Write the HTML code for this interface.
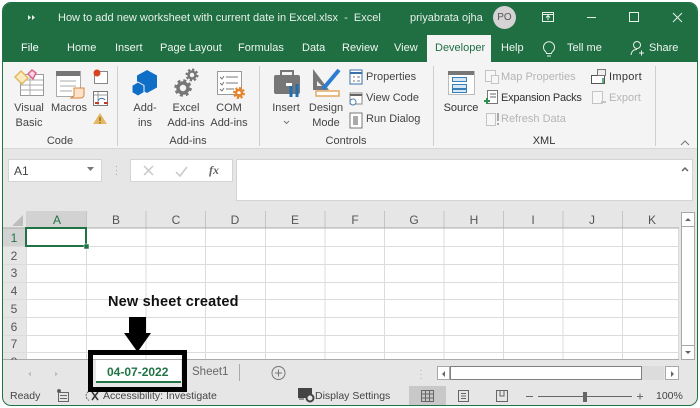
<!DOCTYPE html>
<html><head><meta charset="utf-8">
<style>
html,body{margin:0;padding:0;background:#fff}
#w{position:relative;width:700px;height:408px;overflow:hidden;background:#fff;font-family:"Liberation Sans",sans-serif;color:#444}
#w div.t{position:absolute;white-space:nowrap;font-size:11px;line-height:14px}
#w div.s{font-size:10.5px}
.c{text-align:center;transform:translateX(-50%)}
.a{position:absolute}
</style></head><body><div id="w">
<div class="a" style="left:2px;top:2px;width:696px;height:404px;background:#e6e6e6;border-radius:9px;overflow:hidden;box-sizing:border-box;border:1px solid #217346">
<div class="a" style="left:-1px;top:-1px;width:696px;height:61px;background:#1f6f43"></div>
</div>
<div class="a" style="left:3px;top:62px;width:694px;height:86px;background:#f4f4f4;border-bottom:1px solid #d8d8d8"></div>
<div class="a" style="left:427px;top:35px;width:64px;height:28px;background:#f4f4f4"></div>

<!-- title text -->
<div class="t" style="left:58px;top:11px;color:#e8f0ea">How to add new worksheet with current date in Excel.xlsx&nbsp; -&nbsp; Excel</div>
<div class="t" style="left:410px;top:11px;color:#e8f0ea">priyabrata ojha</div>
<div class="a" style="left:493px;top:6px;width:23px;height:23px;border-radius:50%;background:#d5d3d3;color:#555;font-size:10px;line-height:23px;text-align:center">PO</div>
<svg class="a" style="left:0;top:0" width="700" height="62" fill="none" stroke="#e8f0ea">
<path d="M28 15l3 2.500-3 2.500zM32 15l3 2.500-3 2.500z" fill="#e8f0ea" stroke="none"/>
<rect x="542.500" y="12.500" width="11" height="9"/><path d="M542 14.500h12M548 20v-4M546 17.500l2-2 2 2"/>
<path d="M587 17.500h9"/><rect x="629.500" y="12.500" width="9" height="9"/><path d="M673 13l9 9M682 13l-9 9"/>
<path d="M545.500 51.500a5.500 5.500 0 1 1 7 0c-.7.6-1 1.200-1 2h-5c0-.8-.3-1.400-1-2zM547 56h4"/>
<circle cx="637" cy="45" r="3.500"/><path d="M631 55c.5-4 3-5.500 6-5.500M639 53h5M641.500 50.500v5"/>
</svg>
<div class="t" style="left:21px;top:41px;color:#fff">File</div>
<div class="t" style="left:67px;top:41px;color:#f0f5f1">Home</div>
<div class="t" style="left:115px;top:41px;color:#f0f5f1">Insert</div>
<div class="t" style="left:160px;top:41px;color:#f0f5f1">Page Layout</div>
<div class="t" style="left:238px;top:41px;color:#f0f5f1">Formulas</div>
<div class="t" style="left:302px;top:41px;color:#f0f5f1">Data</div>
<div class="t" style="left:342px;top:41px;color:#f0f5f1">Review</div>
<div class="t" style="left:394px;top:41px;color:#f0f5f1">View</div>
<div class="t" style="left:435px;top:41px;color:#1f6f43">Developer</div>
<div class="t" style="left:501px;top:41px;color:#f0f5f1">Help</div>
<div class="t" style="left:567px;top:41px;color:#f0f5f1">Tell me</div>
<div class="t" style="left:649px;top:41px;color:#f0f5f1">Share</div>

<!-- ribbon text -->
<div class="t c" style="left:29px;top:101px">Visual</div><div class="t c" style="left:29px;top:116px">Basic</div>
<div class="t c" style="left:69px;top:101px">Macros</div>
<div class="t c" style="left:60px;top:134px">Code</div>
<div class="t c" style="left:145px;top:101px">Add-</div><div class="t c" style="left:145px;top:116px">ins</div>
<div class="t c" style="left:186px;top:101px">Excel</div><div class="t c" style="left:186px;top:116px">Add-ins</div>
<div class="t c" style="left:229px;top:101px">COM</div><div class="t c" style="left:229px;top:116px">Add-ins</div>
<div class="t c" style="left:188px;top:134px">Add-ins</div>
<div class="t c" style="left:286px;top:101px">Insert</div>
<div class="t c" style="left:326px;top:101px">Design</div><div class="t c" style="left:326px;top:116px">Mode</div>
<div class="t c" style="left:346px;top:134px">Controls</div>
<div class="t" style="left:366px;top:70px">Properties</div>
<div class="t" style="left:366px;top:91px">View Code</div>
<div class="t" style="left:366px;top:112px">Run Dialog</div>
<div class="t c" style="left:461px;top:101px;color:#333">Source</div>
<div class="t" style="left:501px;top:70px;color:#b5b5b5">Map Properties</div>
<div class="t" style="left:501px;top:91px;color:#333;letter-spacing:-.25px">Expansion Packs</div>
<div class="t" style="left:501px;top:112px;color:#b5b5b5">Refresh Data</div>
<div class="t" style="left:609px;top:70px;color:#333;letter-spacing:.3px">Import</div>
<div class="t" style="left:609px;top:91px;color:#b5b5b5">Export</div>
<div class="t c" style="left:544px;top:134px;color:#333">XML</div>

<svg class="a" style="left:0;top:62px" width="700" height="90" fill="none" stroke="#777">
<path d="M117.500 4v80M259.500 4v80M433.500 4v80M655.500 4v80" stroke="#cfcfcf"/>
<!-- visual basic -->
<rect x="20.500" y="12.500" width="23" height="21" fill="#fff" stroke="#999"/><path d="M20 18h23M20 23h23M20 28h23M30 13v21" stroke="#aaa"/>
<path d="M15 15l6-6 7 7-6 6z" fill="#fbe9c0" stroke="#e2b860" stroke-width="1.500"/><path d="M28 12l4-4 4 3-3 6z" fill="#fbd8e4" stroke="#d9648c" stroke-width="1.500"/>
<!-- macros -->
<rect x="56.500" y="9.500" width="24" height="25" fill="#fff" stroke="#aaa"/><rect x="56" y="9" width="24" height="5" fill="#777" stroke="none"/><path d="M60 19h16M60 24h16M60 29h12" stroke="#aaa"/>
<path d="M74 26h10v7c0 2-2 3-3 3h-10c1-1 3-1 3-3z" fill="#fbe2c8" stroke="#d9843b"/>
<!-- code small -->
<rect x="94.500" y="9.500" width="13" height="12" fill="#fff" stroke="#888"/><circle cx="97" cy="11" r="3.500" fill="#d8431f" stroke="none"/>
<rect x="93.500" y="29.500" width="14" height="14" fill="#fff" stroke="#777"/><path d="M94 33h14M98 30v14" stroke="#999"/><path d="M98 39a4 4 0 0 1 7-1" stroke="#3a78b8"/><path d="M95 41h4M104 41h4" stroke="#c0392b" stroke-width="2"/>
<path d="M100 51l7 11h-14z" fill="#e4b860" stroke="none"/><path d="M100 55v4M100 60v1.500" stroke="#6b4a10"/>
<!-- add-ins -->
<path d="M147 8l10 5.500v12l-10 5.500-10-5.500v-12z" fill="#0f6fc6" stroke="none"/><path d="M138 20l6 3.500v7l-6 3.500-6-3.500v-7z" fill="#0f6fc6" stroke="#f4f4f4"/>
<!-- gears -->
<circle cx="183" cy="26" r="5" stroke="#777" stroke-width="3.500"/><circle cx="183" cy="26" r="7.500" stroke="#777" stroke-width="2.500" stroke-dasharray="3 2.900"/>
<circle cx="192" cy="13" r="3.500" stroke="#777" stroke-width="2.500"/><circle cx="192" cy="13" r="5.500" stroke="#777" stroke-width="2" stroke-dasharray="2.300 2"/>
<!-- COM -->
<rect x="217.500" y="9.500" width="24" height="23" fill="#fff" stroke="#999"/><path d="M226 15h12M226 21h12M226 27h8M220 15l2 2 2-3M220 21l2 2 2-3M220 27l2 2 2-3" stroke="#777"/>
<circle cx="239" cy="31" r="3" stroke="#e8832a" stroke-width="2.500"/><circle cx="239" cy="31" r="5" stroke="#e8832a" stroke-width="2" stroke-dasharray="2.300 1.600"/>
<!-- insert -->
<rect x="274" y="13" width="26" height="19" rx="2" fill="#777" stroke="none"/><path d="M281 13v-4h12v4" stroke-width="2"/><path d="M291 24v11M297 22v13" stroke="#1f6fb5" stroke-width="3"/><rect x="286" y="21" width="6" height="3" fill="#fff" stroke="none"/>
<path d="M284 59l2.500 2.500 2.500-2.500"/>
<!-- design mode -->
<path d="M313 7l16 21h-16zM317 19v5h5z" fill="#777" stroke="none" fill-rule="evenodd"/><path d="M323 27l16-19" stroke="#2b7cd3" stroke-width="4"/>
<rect x="316" y="29" width="23" height="5" fill="#fff" stroke="#e2a860" stroke-width="1.500"/>
<!-- properties etc -->
<rect x="350" y="8" width="12" height="14" fill="#fff" stroke="#3a70a8"/><path d="M350 11h12" stroke="#3a70a8" stroke-width="2"/><path d="M353 15h2M357 15h3M353 19h2M357 19h3" stroke="#777"/>
<rect x="350" y="31" width="12" height="11" fill="#fff" stroke="#888"/><path d="M350 33h12" stroke="#666" stroke-width="2"/><circle cx="353" cy="40" r="3" fill="#fff" stroke="#4a7fb0"/>
<rect x="350" y="51" width="12" height="15" fill="#fff" stroke="#777"/><rect x="353" y="54" width="5" height="9" fill="#aaa" stroke="none"/>
<!-- source -->
<rect x="448.500" y="9.500" width="26" height="23" fill="#fff" stroke="#bbb"/><rect x="448" y="9" width="26" height="4" fill="#777" stroke="none"/><rect x="452.500" y="15.500" width="14" height="4" fill="#d6e8f5" stroke="#3a80b8"/><rect x="452.500" y="22.500" width="14" height="4" fill="#d6e8f5" stroke="#3a80b8"/><rect x="452.500" y="27.500" width="14" height="3" fill="#d6e8f5" stroke="#3a80b8"/>
<!-- map props -->
<g stroke="#c4c4c4"><rect x="485.500" y="8.500" width="10" height="11" fill="#f7f7f7"/><rect x="491.500" y="13.500" width="7" height="8" fill="#f7f7f7"/>
<rect x="486.500" y="51.500" width="9" height="12" fill="#f7f7f7"/><path d="M498 51v8M498 61v2" stroke="#aaa" stroke-width="2"/>
<rect x="592.500" y="29.500" width="10" height="12" fill="#f7f7f7"/><path d="M601 40h5" stroke-width="2"/></g>
<rect x="487.500" y="28.500" width="10" height="13" fill="#fff" stroke="#777"/><path d="M484 39h6M487 36v6" stroke="#2f8f4f" stroke-width="2"/><path d="M490 32h6M490 35h6" stroke="#666"/>
<rect x="591.500" y="13.500" width="13" height="8" fill="#fff" stroke="#555"/><rect x="597.500" y="7.500" width="8" height="6" fill="#eee" stroke="#777"/><path d="M603 22v-6" stroke="#2f8f4f" stroke-width="1.500"/>
</svg>
<svg class="a" style="left:0;top:0" width="700" height="408" fill="none" stroke="#777">
<path d="M681 145l4-4 4 4"/>
</svg>

<!-- formula bar -->
<div class="a" style="left:8px;top:159px;width:94px;height:23px;background:#fff;border:1px solid #d4d4d4;box-sizing:border-box"></div>
<div class="t" style="left:14px;top:164px;font-size:12px">A1</div>
<div class="a" style="left:130px;top:159px;width:103px;height:23px;background:#fff;border:1px solid #d4d4d4;box-sizing:border-box"></div>
<div class="a" style="left:236px;top:159px;width:457px;height:42px;background:#fff;border:1px solid #d4d4d4;box-sizing:border-box"></div>
<div class="t" style="left:209px;top:163px;font:italic bold 12px 'Liberation Serif',serif;color:#666">fx</div>
<svg class="a" style="left:0;top:150px" width="700" height="60" fill="none">
<path d="M87 17l3.500 4 3.500-4z" fill="#777"/>
<path d="M116.500 16v1M116.500 20v1M116.500 24v1" stroke="#aaa"/>
<path d="M144 16l9 9M153 16l-9 9M176 22l4 4 7-9" stroke="#c8c8c8" stroke-width="1.500"/>
<path d="M682 21l3-3 3 3" stroke="#666" stroke-width="1.500"/>
</svg>

<!-- grid -->
<svg class="a" style="left:0;top:210px" width="700" height="152" font-family="Liberation Sans" font-size="12" fill="#555">
<rect x="3" y="1" width="676" height="17" fill="#e6e6e6"/>
<rect x="3" y="18" width="23" height="132" fill="#e6e6e6"/>
<rect x="26" y="18" width="653" height="132" fill="#fff"/>
<rect x="26" y="1" width="60" height="17" fill="#d2d2d2"/>
<rect x="3" y="18" width="23" height="19" fill="#d2d2d2"/>
<path d="M23 5v11H12z" fill="#bdbdbd"/>
<g stroke="#dcdcdc" fill="none">
<path d="M26.500 18v132M86.500 18v132M146 18v132M205.500 18v132M265.500 18v132M325 18v132M384.500 18v132M444 18v132M503.500 18v132M563 18v132M622.500 18v132M678.500 18v132"/>
<path d="M3 36.500h676M3 54.500h676M3 72.500h676M3 89.500h676M3 107.500h676M3 125.500h676M3 142.500h676"/>
<path d="M86.500 1v17M146 1v17M205.500 1v17M265.500 1v17M325 1v17M384.500 1v17M444 1v17M503.500 1v17M563 1v17M622.500 1v17" stroke="#c4c4c4"/>
</g>
<path d="M3 18h676" stroke="#ababab"/>
<path d="M3 149.500h676" stroke="#ababab"/>
<g text-anchor="middle">
<text x="57" y="14" fill="#217346">A</text><text x="116" y="14">B</text><text x="176" y="14">C</text><text x="235" y="14">D</text><text x="295" y="14">E</text><text x="355" y="14">F</text><text x="414" y="14">G</text><text x="474" y="14">H</text><text x="533" y="14">I</text><text x="592" y="14">J</text><text x="652" y="14">K</text>
<text x="14" y="32" fill="#217346">1</text><text x="14" y="50">2</text><text x="14" y="67">3</text><text x="14" y="85">4</text><text x="14" y="103">5</text><text x="14" y="121">6</text><text x="14" y="138">7</text><text x="14" y="156">8</text>
</g>
<rect x="26" y="18" width="60" height="18" fill="none" stroke="#217346" stroke-width="2"/>
<rect x="84" y="34" width="5" height="5" fill="#217346" stroke="#fff" stroke-width=".5"/>
</svg>

<!-- v scrollbar -->
<div class="a" style="left:681px;top:212px;width:14px;height:148px;background:#fff;border:1px solid #a8a8a8;box-sizing:border-box"></div>
<svg class="a" style="left:681px;top:212px" width="14" height="148" fill="none"><path d="M0 14.500h14M0 133.500h14" stroke="#a8a8a8"/><path d="M4 9l3-3 3 3zM4 139l3 3 3-3z" fill="#666"/></svg>

<!-- tab strip -->
<div class="a" style="left:3px;top:360px;width:694px;height:26px;background:#e6e6e6"></div>
<div class="a" style="left:96px;top:360px;width:85px;height:23px;background:#fff;border-bottom:2px solid #217346;box-sizing:border-box"></div>
<svg class="a" style="left:0;top:360px" width="700" height="27" fill="none">
<path d="M31 11.500l-3 2.500 3 2.500zM55 11.500l3 2.500-3 2.500z" fill="#c0c0c0"/>
<path d="M239.500 4v17" stroke="#aaa"/>
<circle cx="278.500" cy="13" r="6.500" stroke="#777"/><path d="M275 13h7M278.500 9.500v7" stroke="#777"/>
<path d="M421 10v1M421 14v1M421 18v1" stroke="#b0b0b0"/>
</svg>
<div class="a" style="left:437px;top:366px;width:13px;height:14px;background:#fff;border:1px solid #a8a8a8;box-sizing:border-box"></div>
<div class="a" style="left:450px;top:366px;width:192px;height:14px;background:#fff;border:1px solid #808080;box-sizing:border-box"></div>
<div class="a" style="left:642px;top:366px;width:22px;height:14px;background:#dcdcdc"></div>
<div class="a" style="left:665px;top:366px;width:14px;height:14px;background:#fff;border:1px solid #a8a8a8;box-sizing:border-box"></div>
<svg class="a" style="left:0;top:360px" width="700" height="27"><path d="M445 11l-3 3 3 3zM671 11l3 3-3 3z" fill="#666"/></svg>
<div class="t" style="left:192px;top:365px;color:#666;font-size:11.500px">Sheet1</div>

<!-- status -->
<div class="t s" style="left:10px;top:389px">Ready</div>
<div class="t s" style="left:103px;top:389px">Accessibility: Investigate</div>
<div class="t s" style="left:315px;top:389px">Display Settings</div>
<div class="t s" style="left:656px;top:389px">100%</div>
<div class="a" style="left:409px;top:386px;width:37px;height:19px;background:#c8c8c8"></div>
<svg class="a" style="left:0;top:386px" width="700" height="20" fill="none" stroke="#666">
<rect x="58.500" y="6.500" width="10" height="9"/><circle cx="59" cy="5" r="1.500" fill="#555"/><path d="M60 9.500h7M60 12.500h7"/>
<path d="M91 4.500a6 6 0 0 0-5 5a6 6 0 0 0 3 5" stroke-dasharray="2 1"/><path d="M92 6l6 8M98 6l-6 8" stroke="#333" stroke-width="1.500"/>
<rect x="298" y="2" width="14" height="10" fill="#444" stroke="none"/><circle cx="310" cy="12" r="3.500" stroke="#444" stroke-width="2" fill="#e6e6e6"/><path d="M299 13h5" stroke="#444"/>
<path d="M421.500 4.500h12v11h-12zM421 8h13M421 12h13M425.500 4v11M429.500 4v11"/>
<rect x="458.500" y="4.500" width="10" height="11"/><path d="M461 7.500h5M461 10h5M461 12.500h5"/>
<path d="M496.500 4.500h11v11h-11zM500 5v5h4v-5"/>
<path d="M526 10.500h7M538 10.500h94M637 10.500h6M640 7.500v6"/>
<rect x="583" y="6" width="4" height="10" fill="#666" stroke="none"/>
</svg>

<!-- annotation -->
<div class="t" style="left:108px;top:294px;font-size:14.500px;line-height:16px;font-weight:bold;color:#111;letter-spacing:.2px">New sheet created</div>
<svg class="a" style="left:120px;top:317px" width="34" height="36"><path d="M9 0h17v16h5L17.500 35 4 16h5z" fill="#000"/></svg>
<div class="a" style="left:88px;top:350px;width:99px;height:42px;border:5px solid #000;box-sizing:border-box"></div>
<div class="t" style="left:107px;top:365px;font-size:12px;font-weight:bold;color:#217346">04-07-2022</div>
</div></body></html>
